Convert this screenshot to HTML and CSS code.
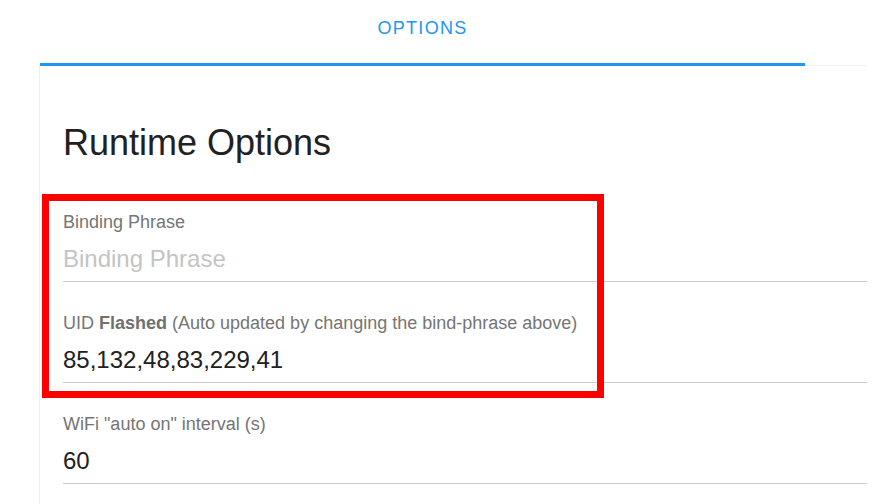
FILE: index.html
```html
<!DOCTYPE html>
<html lang="en">
<head>
    <meta charset="UTF-8">
    <title>Runtime Options</title>
    <link rel="stylesheet" href="styles.css">
</head>
<body>
    <div class="tabbar">
        <div class="tab active">OPTIONS</div>
        <div class="tab-rest"></div>
    </div>

    <div class="card">
        <h2 class="card-title">Runtime Options</h2>

        <div class="field">
            <label for="phrase">Binding Phrase</label>
            <input type="text" id="phrase" placeholder="Binding Phrase">
        </div>
        <div class="field">
            <label for="uid">UID <b>Flashed</b> (Auto updated by changing the bind-phrase above)</label>
            <input type="text" id="uid" value="85,132,48,83,229,41">
        </div>
        <div class="field">
            <label for="wifi">WiFi "auto on" interval (s)</label>
            <input type="text" id="wifi" value="60">
        </div>
    </div>

    <!-- annotation box drawn over the two binding fields -->
    <div class="highlight"></div>
</body>
</html>
```

FILE: styles.css
```css
body {
    margin: 0;
    font-family: "Liberation Sans", Arial, sans-serif;
    background: #fff;
    overflow: hidden;
}
.tabbar {
    display: flex;
    margin-left: 40px;
    height: 66px;
}
.tab {
    width: 765px;
    height: 66px;
    box-sizing: border-box;
    padding-top: 18px;
    text-align: center;
    font-size: 18px;
    line-height: 20px;
    letter-spacing: 1.3px;
    color: #2196f3;
    border-bottom: 3px solid #2196f3;
}
.tab-rest {
    width: 62px;
    height: 65px;
    border-bottom: 1px solid #f2f2f2;
}
.card {
    margin-left: 39px;
    border-left: 1px solid #eeeeee;
    padding: 59px 24px 40px 23px;
    width: 804px;
}
.card-title {
    margin: 0 0 20px;
    font-size: 36px;
    line-height: 36px;
    font-weight: normal;
    color: #212121;
}
.field {
    padding: 30px 0 7px;
    border-bottom: 1px solid #cccccc;
}
.field label {
    display: block;
    font-size: 18px;
    line-height: 22px;
    color: #757575;
    margin-bottom: 11px;
}
.field b {
    color: #707070;
}
.field input {
    display: block;
    width: 100%;
    height: 30px;
    padding: 0;
    border: none;
    outline: none;
    background: transparent;
    font-family: inherit;
    font-size: 24px;
    line-height: 30px;
    color: #212121;
}
.field input::placeholder {
    color: #c4c4c4;
}
.highlight {
    position: absolute;
    left: 42px;
    top: 194px;
    width: 548px;
    height: 190px;
    border: 7px solid #ff0000;
}
```
